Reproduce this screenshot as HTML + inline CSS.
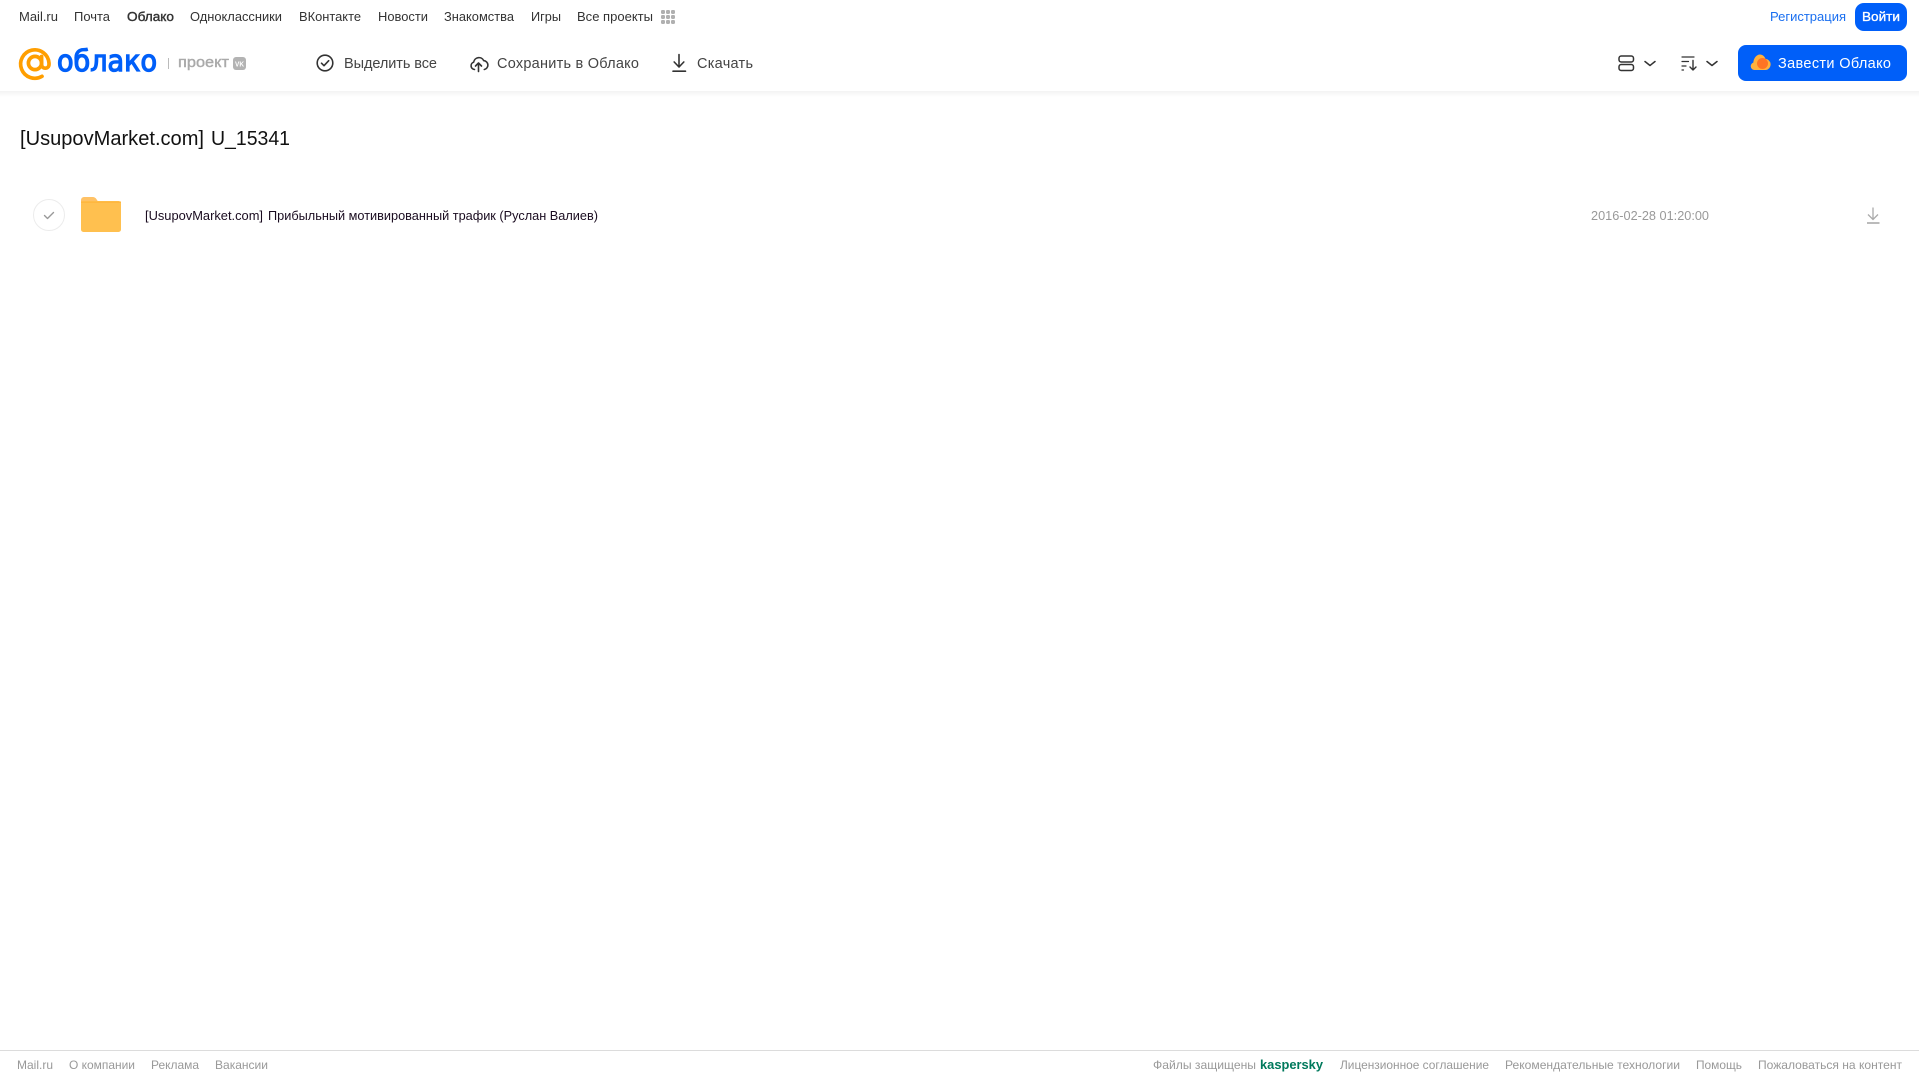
<!DOCTYPE html>
<html lang="ru"><head><meta charset="utf-8"><title>Облако</title>
<style>
html,body{margin:0;padding:0;background:#fff;width:1919px;height:1079px;overflow:hidden}
svg{display:block;position:absolute;left:0;top:0}
text{font-family:"Liberation Sans",sans-serif;dominant-baseline:auto}
.n{font-size:13px;fill:#333}
.t{font-size:14.5px;fill:#444}
.f{font-size:12px;fill:#999}
</style></head><body>
<svg width="1919" height="1079" viewBox="0 0 1919 1079" xmlns="http://www.w3.org/2000/svg">
<defs><linearGradient id="s" x1="0" y1="0" x2="0" y2="1"><stop offset="0" stop-color="#000" stop-opacity=".05"/><stop offset="1" stop-color="#000" stop-opacity="0"/></linearGradient></defs>
<rect x="0" y="91" width="1919" height="6" fill="url(#s)"/>

<text class="n" x="19" y="21" textLength="39" lengthAdjust="spacingAndGlyphs">Mail.ru</text>
<text class="n" x="74" y="21" textLength="36" lengthAdjust="spacingAndGlyphs">Почта</text>
<text class="n" x="127" y="21" textLength="47" lengthAdjust="spacingAndGlyphs" stroke="#333" stroke-width=".4">Облако</text>
<text class="n" x="190" y="21" textLength="92" lengthAdjust="spacingAndGlyphs">Одноклассники</text>
<text class="n" x="299" y="21" textLength="62" lengthAdjust="spacingAndGlyphs">ВКонтакте</text>
<text class="n" x="378" y="21" textLength="50" lengthAdjust="spacingAndGlyphs">Новости</text>
<text class="n" x="444" y="21" textLength="70" lengthAdjust="spacingAndGlyphs">Знакомства</text>
<text class="n" x="531" y="21" textLength="30" lengthAdjust="spacingAndGlyphs">Игры</text>
<text class="n" x="577" y="21" textLength="76" lengthAdjust="spacingAndGlyphs">Все проекты</text>
<g fill="#b0b0b0"><rect x="661" y="10" width="4" height="4" rx="1.200"/><rect x="666" y="10" width="4" height="4" rx="1.200"/><rect x="671" y="10" width="4" height="4" rx="1.200"/><rect x="661" y="15" width="4" height="4" rx="1.200"/><rect x="666" y="15" width="4" height="4" rx="1.200"/><rect x="671" y="15" width="4" height="4" rx="1.200"/><rect x="661" y="20" width="4" height="4" rx="1.200"/><rect x="666" y="20" width="4" height="4" rx="1.200"/><rect x="671" y="20" width="4" height="4" rx="1.200"/></g>

<text x="1770" y="21" font-size="13" fill="#1a6ff0" textLength="76" lengthAdjust="spacingAndGlyphs">Регистрация</text>
<rect x="1855" y="3" width="52" height="28" rx="9" fill="#005ff9"/>
<text x="1862" y="21" font-size="13" fill="#fff" stroke="#fff" stroke-width=".35" textLength="38" lengthAdjust="spacingAndGlyphs">Войти</text>

<!-- logo -->
<g fill="none" stroke="#ff9e00">
<path d="M42 76.300A14.200 14.200 0 1 1 49 63v1.500a3.700 3.700 0 0 1-7.400 0V56.500" stroke-width="3.700" stroke-linecap="round"/>
<circle cx="35" cy="63" r="6.600" stroke-width="3.700"/>
</g>
<text x="57" y="71" font-size="29" fill="#005ff9" textLength="100" lengthAdjust="spacingAndGlyphs" style="font-family:'DejaVu Sans',sans-serif" stroke="#005ff9" stroke-width="1.300">облако</text>
<rect x="168" y="58" width="1" height="11" fill="#bbb"/>
<text x="178" y="67" font-size="14.500" fill="#aaa" stroke="#aaa" stroke-width=".4" textLength="51" lengthAdjust="spacingAndGlyphs">проект</text>
<rect x="233" y="57" width="13" height="13" rx="3" fill="#b3b3b3"/>
<text x="235" y="66.500" font-size="7.500" font-weight="700" fill="#fff" textLength="9" lengthAdjust="spacingAndGlyphs">VK</text>

<!-- toolbar -->
<g fill="none" stroke="#333" stroke-width="1.600" stroke-linecap="round" stroke-linejoin="round">
<circle cx="325" cy="63" r="7.800"/><path d="M321.500 63.200l2.500 2.500 4.700-5"/>
<path d="M474.500 69.500a3.800 3.800 0 0 1-.8-7.400 5.300 5.300 0 0 1 10-1.500 4.500 4.500 0 0 1 .6 8.900"/><path d="M478.500 71.500v-8M475.500 66l3-3 3 3"/>
<path d="M679 54.500v12M674.200 62l4.800 5 4.800-5M673 71.200h12.500"/>
</g>
<text class="t" x="344" y="68" textLength="93" lengthAdjust="spacing">Выделить все</text>
<text class="t" x="497" y="68" textLength="142" lengthAdjust="spacing">Сохранить в Облако</text>
<text class="t" x="697" y="68" textLength="56" lengthAdjust="spacing">Скачать</text>

<!-- right controls -->
<g fill="none" stroke="#333" stroke-width="1.500" stroke-linecap="round" stroke-linejoin="round">
<rect x="1619" y="56" width="14.500" height="6" rx="2.200"/><rect x="1619" y="64.500" width="14.500" height="6" rx="2.200"/>
<path d="M1645 61.500l5 4 5-4M1707 61.500l5 4 5-4"/>
<path d="M1682 57h12M1682 61.500h6.500M1682 66h4M1682 70h1.500" stroke-width="1.200"/><path d="M1693 60.500v9M1690 67l3 3 3-3" stroke-width="1.400"/>
</g>
<rect x="1738" y="45" width="169" height="36" rx="8" fill="#005ff9"/>
<path d="M1754.500 70a3.800 3.800 0 0 1-1.200-7.400c.3-4 3-8.100 6.700-8.100 2.500 0 4.600 1.800 5.500 4.400a5.600 5.600 0 0 1 .5 11.100z" fill="#ffb13d"/>
<circle cx="1762.500" cy="63.500" r="5.500" fill="#ff6a1f" opacity=".85"/>
<text x="1778" y="68" font-size="14.500" fill="#fff" textLength="113" lengthAdjust="spacing">Завести Облако</text>

<!-- title -->
<text x="20" y="145" font-size="20" fill="#111" textLength="184" lengthAdjust="spacingAndGlyphs">[UsupovMarket.com]</text>
<text x="211" y="145" font-size="20" fill="#111" textLength="79" lengthAdjust="spacingAndGlyphs">U_15341</text>

<!-- row -->
<circle cx="49" cy="215" r="15.500" fill="#fff" stroke="#ececec"/>
<path d="M44.500 215.500l3 3 6-6" fill="none" stroke="#999" stroke-width="1.400" stroke-linecap="round" stroke-linejoin="round"/>
<path d="M81 200a3 3 0 0 1 3-3h8.500c2 0 3 .8 4 2.200l1.500 2.300H81z" fill="#ffc266"/>
<rect x="81" y="201" width="40" height="31" rx="2.500" fill="#ffc04f"/>
<rect x="81" y="201.500" width="40" height="1.500" fill="#ffb73f"/>
<text x="145" y="220" font-size="12.500" fill="#1a0c20" textLength="118" lengthAdjust="spacingAndGlyphs">[UsupovMarket.com]</text>
<text x="268" y="220" font-size="12.500" fill="#1a0c20" textLength="330" lengthAdjust="spacingAndGlyphs">Прибыльный мотивированный трафик (Руслан Валиев)</text>
<text x="1591" y="220" font-size="12.500" fill="#999" textLength="118" lengthAdjust="spacingAndGlyphs">2016-02-28 01:20:00</text>
<g fill="none" stroke="#aaa" stroke-width="1.300"><path d="M1873 207.500v11.500M1868 214.500l5 5 5-5"/><path d="M1867 223h12.500" stroke-width="1.600"/></g>

<!-- footer -->
<rect x="0" y="1050" width="1919" height="1" fill="#dcdcdc"/>
<text class="f" x="17" y="1069" textLength="36" lengthAdjust="spacingAndGlyphs">Mail.ru</text>
<text class="f" x="69" y="1069" textLength="66" lengthAdjust="spacingAndGlyphs">О компании</text>
<text class="f" x="151" y="1069" textLength="48" lengthAdjust="spacingAndGlyphs">Реклама</text>
<text class="f" x="215" y="1069" textLength="53" lengthAdjust="spacingAndGlyphs">Вакансии</text>
<text class="f" x="1153" y="1069" textLength="103" lengthAdjust="spacingAndGlyphs">Файлы защищены</text>
<text x="1260" y="1069" font-size="13" font-weight="700" fill="#00795c" textLength="63" lengthAdjust="spacingAndGlyphs">kaspersky</text>
<text class="f" x="1340" y="1069" textLength="149" lengthAdjust="spacingAndGlyphs">Лицензионное соглашение</text>
<text class="f" x="1505" y="1069" textLength="175" lengthAdjust="spacingAndGlyphs">Рекомендательные технологии</text>
<text class="f" x="1696" y="1069" textLength="46" lengthAdjust="spacingAndGlyphs">Помощь</text>
<text class="f" x="1758" y="1069" textLength="144" lengthAdjust="spacingAndGlyphs">Пожаловаться на контент</text>
</svg>
</body></html>
